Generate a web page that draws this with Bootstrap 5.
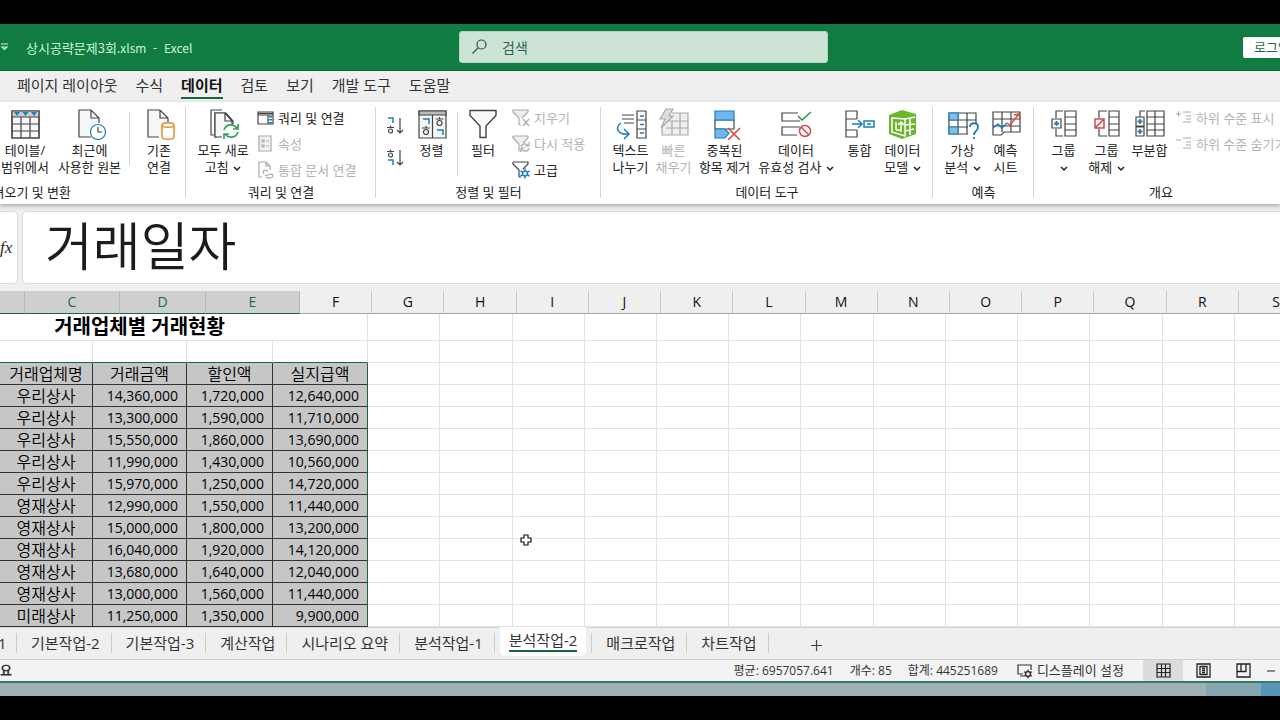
<!DOCTYPE html>
<html lang="ko">
<head>
<meta charset="utf-8">
<meta name="viewport" content="width=device-width, initial-scale=1">
<title>상시공략문제3회.xlsm - Excel</title>
<link href="https://cdn.jsdelivr.net/npm/bootstrap@5.3.0/dist/css/bootstrap.min.css" rel="stylesheet">
<style>
:root{--xl:#107c41;--pane:#efefef;--ink:#262626}
body{font-family:"Open Sans","Noto Sans CJK KR",sans-serif;color:var(--ink);background:#000;font-size:13px;line-height:17px}
button,input{font-family:inherit;color:inherit}
button{background:none;border:0;padding:0}
svg{display:block;flex:none;fill:none;stroke:#444;stroke-width:1.2}
.screen{min-height:100vh;padding:24px 0}
.titlebar{display:grid;grid-template-columns:459fr 369fr 452fr;height:47px;background:var(--xl);border-bottom:1px solid #0b6534;color:#c9f7d8}
.titlebar .doc{font-family:"Noto Sans CJK KR",sans-serif;white-space:pre}
.titlebar .doc small{font-size:12px}
.search{height:32px;background:#cde3d6;border:1px solid #a9d8bd;border-radius:3px;color:#1d5a3a}
.search input{background:none;border:0;outline:0;font-size:14px;padding:0}
.search input::placeholder{color:#2a6847;opacity:1}
.login{height:21px;width:59px;margin-right:-22px;background:#fff;color:#1d6b43;border-radius:2px;padding-left:11px;text-align:left}
.menu{height:31px;background:var(--pane);font-size:15px;padding-left:17px;gap:18px}
.menu a{color:#333;text-decoration:none;line-height:23px;border-bottom:2px solid transparent}
.menu a.active{font-weight:700;color:#111;border-color:#14693c}
.ribbon{display:grid;grid-template-columns:186px 190px 225px 332px 101px 1fr;height:102px;background:#fff;box-shadow:0 2px 4px #aaa;z-index:1;color:#222}
.grp{position:relative;padding-top:6px}
.grp:not(:last-child)::after{content:"";position:absolute;right:0;top:5px;bottom:6px;border-right:1px solid #d5d5d5}
.tools{height:76px}
.grp-name{text-align:center;line-height:16px;white-space:nowrap}
.big{display:flex;flex:none;flex-direction:column;align-items:center;white-space:nowrap;color:#222}
.big span{display:block;margin-top:2px}
.big>svg{width:32px;height:32px}
.w43{width:43px}.w50{width:50px}.w59{width:59px}.w79{width:79px}.w84{width:84px}
.rule{width:1px;height:54px;background:#d5d5d5;margin-top:4px}
.stack{display:flex;flex-direction:column;gap:6px;align-items:flex-start}
.stack button{display:flex;align-items:center;gap:4px;height:20px;white-space:nowrap}
.off{color:#b3b3b3!important}
.off svg{stroke:#aaa}
.chev{display:inline-block;width:8px;height:6px;stroke:#222;stroke-width:1.5;margin-left:1px}
.fbar{display:grid;grid-template-columns:18px 1fr;grid-template-rows:73px;gap:4px;height:87px;padding:7px 0 7px;background:var(--pane)}
.fbar>*{background:#fff;border:1px solid #d9d9d9;border-radius:0 5px 5px 0;min-width:0}
.fx{border-left:0!important;font:italic 17px "Liberation Serif",serif;display:flex;align-items:center}
.fbar input{border-radius:5px 0 0 5px;height:73px;font-size:52px;font-weight:350;padding:0 0 8px 22px;border-right:0;outline:0;color:#1c1c1c;font-family:"Noto Sans CJK KR",sans-serif;width:100%}
.cells{table-layout:fixed;width:100%;border-collapse:separate;border-spacing:0;color:#111}
.heads th{height:23px;padding:0;font-weight:400;font-size:14px;line-height:20px;text-align:center;background:var(--pane);border-right:1px solid #c8c8c8;border-bottom:1px solid #a5a5a5}
.heads th.on{background:#cfcfcf;color:#1e6a43;border-right-color:#b5b5b5;border-bottom:1px solid #14693c}
.heads th:last-child{text-align:right;border-right:0}
.sheet{position:relative;background:#fff;flex:1 0 auto;overflow:hidden}
.sheet td,.sheet th{height:22px;padding:0 8px 0 0;line-height:20px;font-size:14px;text-align:right;border-right:1px solid #e2e2e2;border-bottom:1px solid #e2e2e2;font-weight:400;white-space:nowrap}
.sheet td:last-child{border-right:0}
.sheet tr:first-child td{height:27px}
.sheet .caption-cell{font-size:20px;font-weight:700;text-align:center;line-height:24px;padding-right:88px;color:#000}
.sheet .sel{background:#c6c6c6;border-color:#333;color:#000}
.sheet .sel.name,.sheet th.sel{text-align:center;font-size:16px;font-weight:350;padding:0}
.sheet .sel.edge{border-right:1px solid #14693c}
.sheet .above{border-bottom-color:#14693c}
.cross{position:absolute;left:520px;top:220px}
.tabs{height:33px;background:var(--pane);border-top:1px solid #d5d5d5;border-bottom:1px solid #cfcfcf;font-size:15px;line-height:20px}
.tabs button{height:20px;margin-top:5px;padding:0 11px 0 14px;border-right:1px solid #ccc;white-space:nowrap;color:#333}
.tabs button:first-child{padding:0;width:17px;text-align:left;text-indent:-2px}
.tabs .cur{background:#fff;height:29px;margin:-1px 5px 0;border:0;border-radius:0 0 5px 5px;padding:0 9px 2px}
.tabs .cur span{display:block;border-bottom:2px solid #14693c}
.tabs .cur+button{border-left:1px solid #ccc}
.status{height:21px;background:#f3f3f3;font-size:12px;color:#333}
.status button{height:21px;display:flex;align-items:center;justify-content:center}
.view{width:40px}
.view.active{background:#dcdcdc}
.desk{height:15px;border-top:2px solid #39796a;background:#9eb1b5}
.desk div:nth-child(1){width:55px;background:#86a6b2}
.desk div:nth-child(2){width:19px;background:#5896b9}
</style>
</head>
<body>
<div class="screen d-flex flex-column overflow-hidden">
<header class="titlebar align-items-center">
  <div class="doc d-flex align-items-center"><svg width="10" height="10" viewBox="0 0 10 10" style="stroke:#c9f7d8"><path d="M1 2h7M2 5l2.500 2.500L7 5z"/></svg><span class="ms-3">상시공략문제3회<small>.xlsm  -  Excel</small></span></div>
  <label class="search d-flex align-items-center"><svg class="ms-2" width="26" height="18" viewBox="0 0 26 18" style="stroke:#1d5a3a"><circle cx="13.500" cy="6.500" r="4.500"/><path d="M10.300 9.700L4.500 15.500"/></svg><input class="ms-2 flex-grow-1" type="text" placeholder="검색" aria-label="검색"></label>
  <div class="d-flex justify-content-end"><button class="login">로그인</button></div>
</header>
<nav class="menu d-flex align-items-center text-nowrap">
  <a href="#">페이지 레이아웃</a><a href="#">수식</a><a href="#" class="active">데이터</a><a href="#">검토</a><a href="#">보기</a><a href="#">개발 도구</a><a href="#">도움말</a>
</nav>
<section class="ribbon position-relative">
  <div class="grp"><div class="tools d-flex">
    <button class="big w50"><svg viewBox="0 0 32 32"><path fill="#f7f7f7" d="M3 3h27v27H3z"/><path stroke="none" fill="#ccc" d="M3 3h27v6H3z"/><path d="M3 3h27v27H3zM3 9h27M3 16h27M3 23h27M12 9v21M21 9v21"/><path stroke="none" fill="#1c7fc0" d="M5 4h6l-3 4zM13.500 4h6l-3 4zM22 4h6l-3 4z"/></svg><span>테이블/<br>범위에서</span></button>
    <button class="big w79"><svg viewBox="0 0 32 32"><path fill="#f7f7f7" d="M17 29H5V2h12l8 8v5M17 2v8h8"/><circle cx="24" cy="24" r="7.500" fill="#fff" stroke="#1c7fc0"/><path d="M24 19v5h4"/></svg><span>최근에<br>사용한 원본</span></button>
    <div class="rule"></div>
    <button class="big w50 ms-1"><svg viewBox="0 0 32 32"><path fill="#f7f7f7" d="M16 29H5V2h12l8 8v4M17 2v8h8"/><path fill="#fff" stroke="#e58a2b" stroke-width="1.500" d="M19 17c0-3 12-3 12 0v12c0 3-12 3-12 0zM19 17c0 3 12 3 12 0"/></svg><span>기존<br>연결</span></button>
  </div><div class="grp-name" style="width:71px;direction:rtl">져오기 및 변환</div></div>

  <div class="grp"><div class="tools d-flex ps-1">
    <button class="big" style="width:66px"><svg viewBox="0 0 32 32"><path d="M7 27H4V2h11M10 29H8V5h11l7 8v3"/><path fill="#f7f7f7" d="M15 29H8V5h10l7 8v4M18 5v8h7"/><path stroke="#fff" stroke-width="4" d="M16 20h9v10"/><path stroke="#35a05d" stroke-width="1.700" d="M17 22c2-6 9-7 13-2M31 16v5h-5M31 24c-2 6-9 7-13 2M17 31v-5h5"/></svg><span>모두 새로<br>고침 <svg class="chev" viewBox="0 0 8 6"><path d="M1 1l3 3 3-3"/></svg></span></button>
    <div class="stack">
      <button><svg width="18" height="18" viewBox="0 0 18 18"><path d="M2 3h15v12H2zM2 6h15M12 6v9"/><path stroke="#1c7fc0" stroke-dasharray="1.500 1.500" stroke-width="3" d="M14.500 7v8"/><path d="M2 4.500h15"/></svg>쿼리 및 연결</button>
      <button class="off" disabled><svg width="18" height="18" viewBox="0 0 18 18"><path fill="#f2f2f2" d="M3 1h12v15H3z"/><path d="M6 5h2v2H6zM6 10h2v2H6zM10 6h3M10 11h3"/></svg>속성</button>
      <button class="off" disabled><svg width="18" height="18" viewBox="0 0 18 18"><path d="M6 16H3V1h7l4 4v4M10 1v4h4M8 13c-3-4 3-5 4-2M16 13c3 4-3 5-6 3M9 14c2 2 5-3 7 0"/></svg>통합 문서 연결</button>
    </div>
  </div><div class="grp-name">쿼리 및 연결</div></div>

  <div class="grp"><div class="tools d-flex">
    <div class="stack ms-2 pt-2" style="gap:12px">
      <button aria-label="오름차순 정렬"><svg width="22" height="20" viewBox="0 0 22 20"><path stroke="#1c7fc0" stroke-width="1.500" d="M4 2h5v5"/><path d="M3 11.500h7M6.500 9.500v2M16 2v15M13 14l3 3 3-3"/><circle cx="6.500" cy="15" r="2"/></svg></button>
      <button aria-label="내림차순 정렬"><svg width="22" height="20" viewBox="0 0 22 20"><path stroke="#1c7fc0" stroke-width="1.500" d="M4 12h5v5"/><path d="M3 3.500h7M6.500 1.500v2M16 2v15M13 14l3 3 3-3"/><circle cx="6.500" cy="7" r="2"/></svg></button>
    </div>
    <button class="big w43 ms-1"><svg viewBox="0 0 32 32"><path fill="#f5f5f5" d="M3 3h27v27H3z"/><path fill="#bbb" d="M3 3h27v4H3z"/><path d="M16.500 7v23"/><path stroke="#1c7fc0" stroke-width="1.500" d="M7 11h6v5M21 22h6v5"/><path d="M6 20h8M10 18v2M19.500 11h8M23.500 9v2"/><circle cx="10" cy="24" r="2.500"/><circle cx="23.500" cy="15" r="2.500"/></svg><span>정렬</span></button>
    <div class="rule ms-1" style="height:64px"></div>
    <button class="big w50 ms-0"><svg viewBox="0 0 32 32"><path stroke-width="1.400" fill="#fafafa" d="M3 2.500h26v5L19 18v11.500h-6V18L3 7.500z"/></svg><span>필터</span></button>
    <div class="stack ms-1">
      <button class="off" disabled><svg width="18" height="18" viewBox="0 0 18 18"><path fill="#eee" stroke="none" d="M1 1h15v2l-6 6H7L1 3z"/><path d="M7 16V9L1 3V1h15v2l-6 6M7 16h2M11 10l6 7M17 10l-6 7"/></svg>지우기</button>
      <button class="off" disabled><svg width="18" height="18" viewBox="0 0 18 18"><path fill="#eee" stroke="none" d="M1 1h15v2l-6 5H7L1 3z"/><path d="M1 1h15v2l-5 5M7 16V9L1 3V1M7 16h2M9 12c1-4 6-4 7-1M17 7v4h-4M17 13c-1 4-6 4-7 1M9 17v-4h4"/></svg>다시 적용</button>
      <button><svg width="18" height="18" viewBox="0 0 18 18"><path d="M1 1h15v2l-5 5M7 16h2M7 16V9L1 3V1"/><circle cx="13" cy="12.500" r="2.500" stroke="#1c7fc0" stroke-width="1.500"/><path stroke="#1c7fc0" stroke-width="1.500" d="M13 7.500v2M13 15.500v2M8.500 10l2 1M15.500 14l2 1M17.500 10l-2 1M10.500 14l-2 1"/></svg>고급</button>
    </div>
  </div><div class="grp-name">정렬 및 필터</div></div>

  <div class="grp"><div class="tools d-flex ps-2">
    <button class="big w43"><svg viewBox="0 0 32 32"><path d="M7 7h12M7 11h12M9 15h10M22 3h9v27h-9zM22 12h9M22 21h9"/><path stroke="#1c7fc0" stroke-width="1.500" d="M6 15c-6 4-4 12 7 11M9 21l5 5-5 5M25 8h4M25 16.500h4M25 25h4"/></svg><span>텍스트<br>나누기</span></button>
    <button class="big w43 off" disabled><svg viewBox="0 0 32 32"><path fill="#eee" d="M14 5h16v22H4v-9M10 13h20M8 20h22M14 13v14M22 5v22"/><path fill="#ddd" d="M8 1h7l-4 7h4L3 20l4-9H2z"/></svg><span>빠른<br>채우기</span></button>
    <button class="big w59"><svg viewBox="0 0 32 32"><path fill="#fff" d="M6 12h19v9H6z"/><path fill="#6fb7ec" stroke="#1c7fc0" d="M6 3h19v9H6zM6 21h10l4 4-4 5H6z"/><path stroke="#d24b46" stroke-width="1.600" d="M19 20l12 12M31 20L19 32"/></svg><span>중복된<br>항목 제거</span></button>
    <button class="big w84"><svg viewBox="0 0 32 32"><path d="M18 5H2v8h18M20 19H2v8h15"/><path stroke="#279653" stroke-width="1.600" d="M18 8l4 4L31 4"/><circle cx="25" cy="23" r="5.500" stroke="#d24b46" stroke-width="1.500"/><path stroke="#d24b46" stroke-width="1.500" d="M21 19l8 8"/></svg><span>데이터<br>유효성 검사 <svg class="chev" viewBox="0 0 8 6"><path d="M1 1l3 3 3-3"/></svg></span></button>
    <button class="big w43"><svg viewBox="0 0 32 32"><path d="M13 11V3H2v8h11M2 11v11M13 22H2v7h11v-7"/><path stroke="#1c7fc0" stroke-width="1.500" d="M8 16h10M14 12l4 4-4 4M20 13h10v6H20zM23 16h4"/></svg><span>통합</span></button>
    <button class="big w43"><svg viewBox="0 0 32 32"><path fill="#6db52c" stroke="none" d="M2 7L15 2l14 4v20l-14 5L2 26z"/><path stroke="#fff" stroke-width="1.500" d="M5 10l13 1v17L5 24zM18 11l10-2M18 17l10-1M18 23l9-2M23 10v17M9 14v8M14 24V14M11 17l3-3 3 3M9 22h5"/></svg><span>데이터<br>모델 <svg class="chev" viewBox="0 0 8 6"><path d="M1 1l3 3 3-3"/></svg></span></button>
  </div><div class="grp-name">데이터 도구</div></div>

  <div class="grp"><div class="tools d-flex ps-2">
    <button class="big w43"><svg viewBox="0 0 32 32"><path d="M2 5h27v21H2zM2 12h27M2 19h27M11 5v21M20 5v21"/><path fill="#83bdea" stroke="#1c7fc0" d="M2 5h9v7H2zM2 19h9v7H2z"/><path stroke="#fff" stroke-width="6" d="M24 28v-9h6v10"/><path stroke="#1c7fc0" stroke-width="1.800" d="M23 19c0-5 8-5 8 0 0 4-4 4-4 8M27 29v2"/></svg><span>가상<br>분석 <svg class="chev" viewBox="0 0 8 6"><path d="M1 1l3 3 3-3"/></svg></span></button>
    <button class="big w43"><svg viewBox="0 0 32 32"><path d="M3 4h27v20H14l-3 3H3zM3 11h27M3 18h27M12 4v20M21 4v20"/><path stroke="#1c7fc0" stroke-width="1.500" d="M3 20l5-4 4 4 5-5"/><path stroke="#d24b46" stroke-width="1.500" d="M17 15l3 2 9-11M24 7l5-1 1 5"/></svg><span>예측<br>시트</span></button>
  </div><div class="grp-name">예측</div></div>

  <div class="grp overflow-hidden"><div class="tools d-flex ps-2">
    <button class="big w43"><svg viewBox="0 0 32 32"><path d="M17 3h11v25H17zM17 9h11M17 16h11M17 22h11M15 3H8v7M15 28H8v-7M4 11h9v9H4z"/><path stroke="#1c7fc0" stroke-width="1.800" d="M8.500 13v5M6 15.500h5"/></svg><span>그룹<br><svg class="chev" viewBox="0 0 8 6"><path d="M1 1l3 3 3-3"/></svg></span></button>
    <button class="big w43"><svg viewBox="0 0 32 32"><path d="M18 3h10v25H18zM18 9h10M18 16h10M18 22h10M16 3H8v7M16 28H8v-7"/><path fill="#fff" stroke="#d24b46" stroke-width="1.500" d="M4 11h9v9H4zM5 19l7-7"/></svg><span>그룹<br>해제 <svg class="chev" viewBox="0 0 8 6"><path d="M1 1l3 3 3-3"/></svg></span></button>
    <button class="big w43"><svg viewBox="0 0 32 32"><path d="M13 3h17v25H13zM13 9h17M13 16h17M13 22h17M21 3v25M11 3H6v6M2 9h8v9H2zM2 19h8v9H2z"/><path stroke="#1c7fc0" stroke-width="1.800" d="M6 11v5M3.500 13.500h5M6 21v5M3.500 23.500h5"/></svg><span>부분합</span></button>
    <div class="stack ms-1">
      <button class="off" disabled><svg width="17" height="18" viewBox="0 0 17 18"><path d="M1 5h5M3.500 2.500v5M8 3h8M11 7h5M11 10h5M8 13h8"/></svg>하위 수준 표시</button>
      <button class="off" disabled><svg width="17" height="18" viewBox="0 0 17 18"><path d="M1 5h5M8 3h8M11 7h5M11 10h5M8 13h8"/></svg>하위 수준 숨기기</button>
    </div>
  </div><div class="grp-name ps-2">개요</div></div>
</section>
<section class="fbar"><div class="fx">fx</div><input type="text" value="거래일자" aria-label="수식 입력줄"></section>
<table class="cells heads"><colgroup id="headCols"></colgroup><thead><tr id="headRow"></tr></thead></table>
<main class="sheet">
  <table class="cells"><colgroup id="bodyCols"></colgroup><tbody id="rows"></tbody></table>
  <svg class="cross" width="12" height="12" viewBox="0 0 12 12"><path fill="#fff" stroke="#111" d="M4 1h4v3h3v4H8v3H4V8H1V4h3z"/></svg>
</main>
<nav class="tabs d-flex align-items-start">
  <button>1</button><button>기본작업-2</button><button>기본작업-3</button><button>계산작업</button><button>시나리오 요약</button><button>분석작업-1</button><button class="cur"><span>분석작업-2</span></button><button>매크로작업</button><button>차트작업</button>
  <button class="border-0 px-5" aria-label="새 시트"><svg style="margin:4px 0 0 -7px" width="13" height="13" viewBox="0 0 13 13"><path d="M6.500 1v11M1 6.500h11"/></svg></button>
</nav>
<footer class="status d-flex align-items-center text-nowrap">
  <b class="me-auto" style="font-size:13px">요</b>
  <span class="me-3">평균: 6957057.641</span><span class="me-3">개수: 85</span><span>합계: 445251689</span>
  <button style="font-size:13px;margin:0 19px"><svg class="me-1" width="16" height="16" viewBox="0 0 16 16"><path stroke="#333" d="M6 11H1V2h13v5M3 13h4"/><circle cx="11" cy="11" r="2.500" stroke="#333" stroke-width="1.500"/><path stroke="#333" d="M11 6.500v2M11 13.500v2M7 8.700l2 1M13 12.300l2 1M15 8.700l-2 1M9 12.300l-2 1"/></svg>디스플레이 설정</button>
  <button class="view active" aria-label="기본"><svg width="15" height="15" viewBox="0 0 15 15"><path stroke="#222" stroke-width="1.200" d="M1 1h13v13H1zM1 5.500h13M1 9.500h13M5.500 1v13M9.500 1v13"/></svg></button>
  <button class="view" aria-label="페이지 레이아웃"><svg width="15" height="15" viewBox="0 0 15 15"><path stroke="#222" stroke-width="1.300" d="M1 1h13v13H1zM4 3.500h7v8H4zM6 5.500h3M6 7.500h3M6 9.500h3"/></svg></button>
  <button class="view" aria-label="페이지 나누기 미리 보기"><svg width="15" height="15" viewBox="0 0 15 15"><path stroke="#222" stroke-width="1.300" d="M1 1h13v13H1zM5 1v7M1 8.500h9V1"/></svg></button>
  <button aria-label="축소"><svg width="17" height="10" viewBox="0 0 17 10"><path d="M4 5h8"/></svg></button>
</footer>
<div class="desk d-flex justify-content-end"><div></div><div></div></div>
</div>
<script>
const cols = (first, autos, last) => [...first, ...Array(autos).fill(0), last]
  .map(w => w ? `<col style="width:${w}px">` : '<col>').join('');
headCols.innerHTML = cols([25, 95, 86, 94], 13, 41);
bodyCols.innerHTML = cols([93, 94, 86, 95], 12, 45);
headRow.innerHTML = ['', ...'CDEFGHIJKLMNOPQRS'].map((c, i) => `<th class="${i < 4 ? 'on' : ''}">${c}</th>`).join('');
const data = [
  ['우리상사','14,360,000','1,720,000','12,640,000'],
  ['우리상사','13,300,000','1,590,000','11,710,000'],
  ['우리상사','15,550,000','1,860,000','13,690,000'],
  ['우리상사','11,990,000','1,430,000','10,560,000'],
  ['우리상사','15,970,000','1,250,000','14,720,000'],
  ['영재상사','12,990,000','1,550,000','11,440,000'],
  ['영재상사','15,000,000','1,800,000','13,200,000'],
  ['영재상사','16,040,000','1,920,000','14,120,000'],
  ['영재상사','13,680,000','1,640,000','12,040,000'],
  ['영재상사','13,000,000','1,560,000','11,440,000'],
  ['미래상사','11,250,000','1,350,000','9,900,000']];
const blank = '<td></td>'.repeat(13);
const row = (cells, tag) => '<tr>' + cells.map((c, i) =>
  `<${tag} class="sel ${i == 0 ? 'name' : ''} ${i == 3 ? 'edge' : ''}">${c}</${tag}>`).join('') + blank + '</tr>';
rows.innerHTML = `<tr><td class="caption-cell" colspan="4">거래업체별 거래현황</td>${blank}</tr>`
  + '<tr>' + '<td class="above"></td>'.repeat(4) + blank + '</tr>'
  + row(['거래업체명','거래금액','할인액','실지급액'], 'th')
  + data.map(r => row(r, 'td')).join('');
</script>
<script src="https://cdn.jsdelivr.net/npm/bootstrap@5.3.0/dist/js/bootstrap.bundle.min.js"></script>
</body>
</html>
